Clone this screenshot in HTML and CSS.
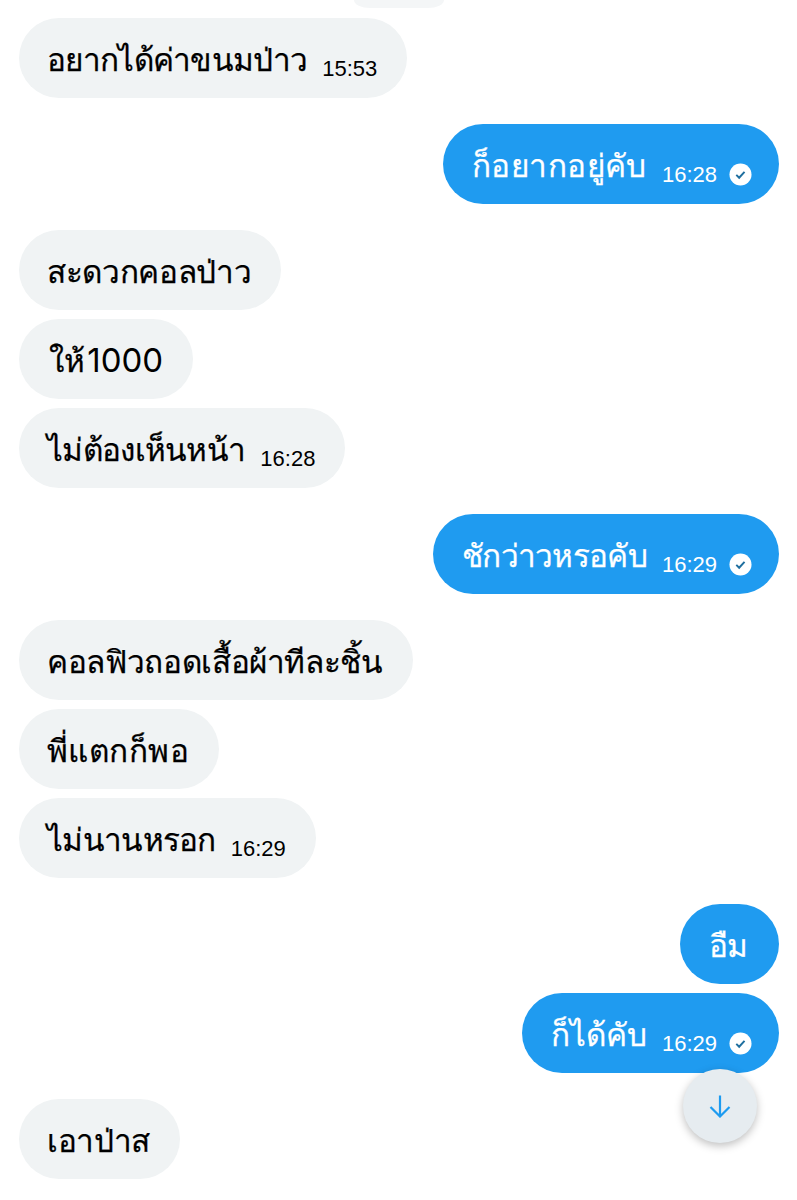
FILE: index.html
```html
<!DOCTYPE html>
<html lang="th">
<head>
    <meta charset="UTF-8">
    <meta name="viewport" content="width=device-width, initial-scale=1.0">
    <title>Chat</title>
    <link rel="stylesheet" href="styles.css">
</head>
<body>
    <div class="chat">
        <div class="date-pill"></div>

        <div class="group">
            <div class="bubble in"><span class="text tight">อยากได้ค่าขนมป่าว</span><span class="time">15:53</span></div>
        </div>

        <div class="group">
            <div class="bubble out"><span class="text wide">ก็อยากอยู่คับ</span><span class="time">16:28</span><svg class="check" viewBox="0 0 24 24"><circle cx="12" cy="12" r="11.5" fill="#fff"/><path d="M7.6 12.4l3 3 5.6-6.2" fill="none" stroke="#1f6f9f" stroke-width="2"/></svg></div>
        </div>

        <div class="group">
            <div class="bubble in"><span class="text">สะดวกคอลป่าว</span></div>
            <div class="bubble in"><span class="text indent">ให้<span class="digits">1000</span></span></div>
            <div class="bubble in"><span class="text tight">ไม่ต้องเห็นหน้า</span><span class="time">16:28</span></div>
        </div>

        <div class="group">
            <div class="bubble out"><span class="text tight">ชักว่าวหรอคับ</span><span class="time">16:29</span><svg class="check" viewBox="0 0 24 24"><circle cx="12" cy="12" r="11.5" fill="#fff"/><path d="M7.6 12.4l3 3 5.6-6.2" fill="none" stroke="#1f6f9f" stroke-width="2"/></svg></div>
        </div>

        <div class="group">
            <div class="bubble in"><span class="text">คอลฟิวถอดเสื้อผ้าทีละชิ้น</span></div>
            <div class="bubble in"><span class="text wide">พี่แตกก็พอ</span></div>
            <div class="bubble in"><span class="text tight">ไม่นานหรอก</span><span class="time">16:29</span></div>
        </div>

        <div class="group">
            <div class="bubble out solo"><span class="text">อืม</span></div>
            <div class="bubble out"><span class="text loose">ก็ได้คับ</span><span class="time">16:29</span><svg class="check" viewBox="0 0 24 24"><circle cx="12" cy="12" r="11.5" fill="#fff"/><path d="M7.6 12.4l3 3 5.6-6.2" fill="none" stroke="#1f6f9f" stroke-width="2"/></svg></div>
        </div>

        <div class="group">
            <div class="bubble in"><span class="text">เอาป่าส</span></div>
        </div>
    </div>

    <button class="scroll-down">
        <svg viewBox="0 0 24 24"><path d="M12 1.5v21M2.5 13l9.5 9.5 9.5-9.5" fill="none" stroke="#1d9bf0" stroke-width="2.2"/></svg>
    </button>
</body>
</html>
```

FILE: styles.css
```css
html {
    height: 100%;
}
body {
    margin: 0;
    height: 1200px;
    overflow: hidden;
    position: relative;
    background: #ffffff;
    font-family: "Liberation Sans", "Noto Sans", "DejaVu Sans", sans-serif;
}
.chat {
    display: flex;
    flex-direction: column;
    gap: 26px;
    padding: 0 18px 0 19px;
}
.date-pill {
    align-self: center;
    width: 90px;
    height: 8px;
    margin-bottom: -16px;
    background: #f4f6f7;
    border-radius: 0 0 16px 16px / 0 0 8px 8px;
}
.group {
    display: flex;
    flex-direction: column;
    gap: 9px;
}
.bubble {
    display: flex;
    align-items: center;
    height: 80px;
    box-sizing: border-box;
    padding: 0 30px 0 28px;
    border-radius: 40px;
    width: fit-content;
}
.in {
    background: #f0f3f4;
    color: #000000;
}
.out {
    align-self: flex-end;
    background: #1f9bf0;
    color: #ffffff;
    padding-left: 29px;
    padding-right: 27px;
}
.solo {
    padding-right: 31px;
}
.text {
    font-size: 31.5px;
    letter-spacing: -0.35px;
    -webkit-text-stroke: 0.25px currentColor;
    margin-top: 3px;
}
.tight {
    letter-spacing: -0.7px;
}
.wide {
    letter-spacing: 0.45px;
}
.loose {
    letter-spacing: 0;
}
.indent {
    margin-left: 2px;
}
.digits {
    margin-left: 3px;
    font-family: "Inter", sans-serif;
    font-weight: 400;
    font-size: 33px;
    letter-spacing: 0;
    -webkit-text-stroke: 0;
}
.time {
    font-size: 22px;
    margin-left: 15px;
    margin-top: 21px;
}
.check {
    width: 23px;
    height: 23px;
    margin-left: 12px;
    margin-top: 20px;
}
.scroll-down {
    position: absolute;
    left: 683px;
    top: 1069px;
    width: 74px;
    height: 74px;
    padding: 25px;
    border: none;
    border-radius: 50%;
    background: #e6ecf0;
    box-shadow: 0 3px 8px rgba(0, 0, 0, 0.25);
}
.scroll-down svg {
    display: block;
    width: 24px;
    height: 24px;
}
```
